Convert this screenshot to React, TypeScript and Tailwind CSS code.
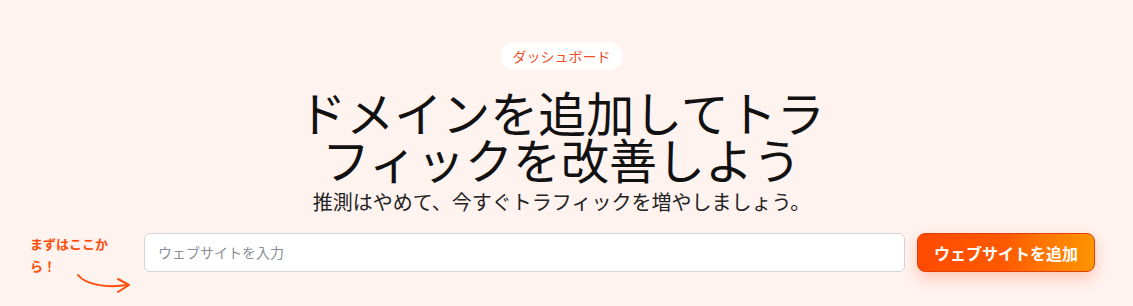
import React from 'react'

const jp = { fontFamily: '"Noto Sans CJK JP", "Noto Sans", sans-serif' }

function CurvedArrow() {
    return (
        <svg width="60" height="26" viewBox="0 0 60 26" fill="none" className="ml-[46px] -mt-[6px]">
            <path d="M2 4 C 10 14, 30 17, 52 14" stroke="#ff4d0a" strokeWidth="2" strokeLinecap="round" />
            <path d="M42 8 L53 14 L42 21" stroke="#ff4d0a" strokeWidth="2" strokeLinecap="round" strokeLinejoin="round" />
        </svg>
    )
}

export default function App() {
    return (
        <div className="w-[1133px] h-[306px] bg-[#fff3f0] overflow-hidden" style={jp}>
            <div className="flex flex-col items-center pt-[42px] pr-[10px]">
                <span className="h-[28px] px-[12px] rounded-full bg-white text-[#f0502a] text-[14px] leading-[28px]">
                    ダッシュボード
                </span>
                <h1 className="mt-[18px] max-w-[540px] text-center text-[48px] leading-[47px] font-normal text-[#111111]">
                    ドメインを追加してトラフィックを改善しよう
                </h1>
                <p className="mt-[6px] text-[20px] leading-[28px] text-[#222222]">
                    推測はやめて、今すぐトラフィックを増やしましょう。
                </p>
            </div>
            <div className="flex items-start pl-[30px] pr-[38px] mt-[17px]">
                <div className="w-[100px] shrink-0">
                    <p className="w-[82px] text-[13px] leading-[22px] font-bold text-[#ff4d0a]">まずはここから！</p>
                    <CurvedArrow />
                </div>
                <div className="ml-[14px] flex-1 h-[39px] flex items-center rounded-md border border-[#d4d4d8] bg-white px-[13px] text-[14px] text-[#8a8f98]">
                    ウェブサイトを入力
                </div>
                <button className="ml-[12px] w-[178px] h-[39px] rounded-lg border border-[#e0400a] bg-gradient-to-r from-[#ff4a00] via-[#ff5a00] to-[#ff9500] text-white text-[16px] font-bold shadow-[0_6px_16px_rgba(255,90,40,0.3)]">
                    ウェブサイトを追加
                </button>
            </div>
        </div>
    )
}
